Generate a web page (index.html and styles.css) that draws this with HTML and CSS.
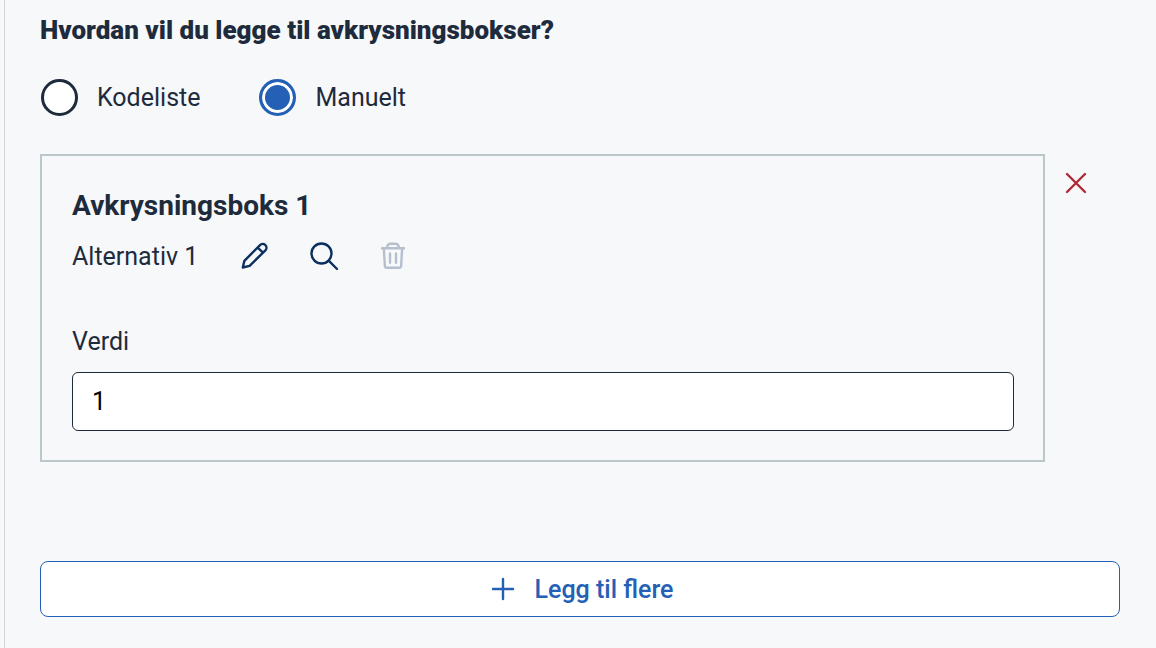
FILE: index.html
```html
<!DOCTYPE html>
<html lang="nb">
<head>
<meta charset="utf-8">
<meta name="viewport" content="width=device-width, initial-scale=1">
<title>Avkrysningsbokser</title>
<link rel="stylesheet" href="styles.css">
</head>
<body>
<main class="panel">
  <fieldset class="source">
    <legend class="source-title">Hvordan vil du legge til avkrysningsbokser?</legend>
    <div class="radios">
      <label class="radio"><input class="radio-input" type="radio" name="source" value="codelist">Kodeliste</label>
      <label class="radio"><input class="radio-input" type="radio" name="source" value="manual" checked>Manuelt</label>
    </div>
  </fieldset>
  <div class="option-row">
    <section class="option">
      <h2 class="option-title">Avkrysningsboks 1</h2>
      <div class="option-text">
        <span class="option-name">Alternativ 1</span>
        <div class="actions">
          <button class="icon-button" type="button" aria-label="Rediger">
            <svg class="icon" viewBox="0 0 32 32"><path d="M4.800 27.500L6.400 20.800L22 5.100A3.700 3.700 0 0 1 27.400 10.300L11.600 25.900Z M19.600 7.500L25 12.700"/></svg>
          </button>
          <button class="icon-button" type="button" aria-label="Søk">
            <svg class="icon" viewBox="0 0 32 32"><circle cx="13.500" cy="13.500" r="10"/><path d="M20.700 20.700L29 29"/></svg>
          </button>
          <button class="icon-button" type="button" aria-label="Slett" disabled>
            <svg class="icon" viewBox="0 0 32 32"><path d="M4 8.200H26M9.200 8.200V7A3.400 3.400 0 0 1 12.600 3.700H17.400A3.400 3.400 0 0 1 20.800 7V8.200M5.800 8.200L6.900 26Q7 27.800 8.900 27.800H21.100Q23 27.800 23.100 26L24.200 8.200M12 13.500V22.700M18 13.500V22.700"/></svg>
          </button>
        </div>
      </div>
      <label class="field-label" for="value">Verdi</label>
      <input class="field-input" id="value" type="text" value="1">
    </section>
    <button class="remove" type="button" aria-label="Fjern">
      <svg class="icon" viewBox="0 0 32 32"><path d="M7 7L25 25M25 7L7 25"/></svg>
    </button>
  </div>
  <button class="add" type="button">
    <svg class="icon" viewBox="0 0 32 32"><path d="M16 6V26M6 16H26"/></svg>
    <span class="add-text">Legg til flere</span>
  </button>
</main>
</body>
</html>
```
FILE: styles.css
```css
* {
  box-sizing: border-box;
}

body {
  margin: 0;
  background: #f7f8fa;
  color: #1e2b3c;
  font-family: Roboto, "Liberation Sans", sans-serif;
  font-size: 25px;
  line-height: 32px;
}

button,
input {
  font: inherit;
  margin: 0;
}

button {
  border: 0;
  padding: 0;
  background: none;
}

.panel {
  min-height: 100vh;
  margin-left: 4px;
  padding: 14px 36px 31px 35px;
  border-left: 1px solid #d2d5d8;
}

.source {
  margin: 0;
  padding: 0;
  border: 0;
}

.source-title {
  padding: 0;
  font-size: 26px;
  font-weight: 900;
}

.radios {
  display: flex;
  gap: 59px;
  padding: 33px 1px 38px;
}

.radio {
  display: flex;
  align-items: center;
  gap: 19px;
}

.radio-input {
  appearance: none;
  width: 37px;
  height: 37px;
  border: 3px solid #1e2b3c;
  border-radius: 50%;
  background: #fff;
}

.radio-input:checked {
  border-color: #2460b5;
  background: #2460b5;
  box-shadow: inset 0 0 0 3px #fff;
}

.option-row {
  display: flex;
  align-items: flex-start;
}

.option {
  flex: 1;
  min-width: 0;
  padding: 32px 29px 29px 30px;
  border: 2px solid #bcc7cc;
}

.option-title {
  margin: 0;
  font-size: 28px;
  font-weight: 700;
  line-height: 36px;
}

.option-text {
  display: flex;
  align-items: flex-start;
  gap: 40px;
  padding-top: 16px;
}

.option-name {
  line-height: 34px;
}

.actions {
  display: flex;
  gap: 38px;
}

.icon-button {
  display: flex;
  color: #0b2f5e;
}

.icon-button:disabled {
  color: #b5c0ce;
}

.icon {
  display: block;
  width: 32px;
  height: 32px;
  fill: none;
  stroke: currentColor;
  stroke-width: 2.4;
  stroke-linecap: round;
  stroke-linejoin: round;
}

.field-label {
  display: block;
  padding-top: 52px;
}

.field-input {
  display: block;
  width: 100%;
  height: 59px;
  margin-top: 14px;
  padding: 0 19px;
  border: 1px solid #1e2b3c;
  border-radius: 6px;
  background: #fff;
  color: #000;
}

.remove {
  padding: 13px 28px 13px 15px;
  color: #ae2a37;
}

.add {
  display: flex;
  align-items: center;
  justify-content: center;
  gap: 16px;
  width: 100%;
  height: 56px;
  margin-top: 99px;
  border: 1px solid #2460b5;
  border-radius: 8px;
  background: #fff;
  color: #2460b5;
  font-weight: 500;
}

.add-text {
  padding-top: 2px;
}
```
